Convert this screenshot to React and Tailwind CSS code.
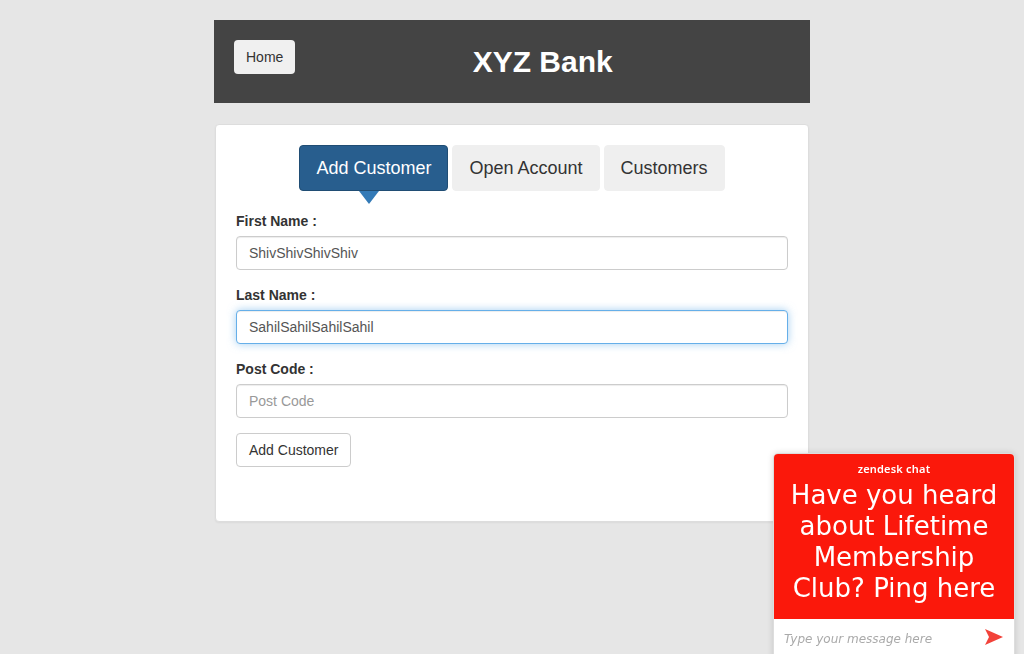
const sans = "font-['Liberation_Sans',Arial,sans-serif]";

function Field({ label, value, placeholder, focused }) {
  return (
    <div className="mb-[15px]">
      <label className="mb-[5px] block text-[14px] font-bold leading-5 text-[#333]">{label}</label>
      <input
        readOnly
        value={value}
        placeholder={placeholder}
        className={
          'block h-[34px] w-full rounded-[4px] border bg-white px-3 text-[14px] text-[#555] outline-none placeholder:text-[#999] ' +
          (focused
            ? 'border-[#66afe9] shadow-[inset_0_1px_1px_rgba(0,0,0,0.075),0_0_8px_rgba(102,175,233,0.6)]'
            : 'border-[#ccc] shadow-[inset_0_1px_1px_rgba(0,0,0,0.075)]')
        }
      />
    </div>
  );
}

export default function App() {
  return (
    <div className={`min-h-[654px] bg-[#e6e6e6] pt-5 ${sans}`}>
      <div className="mx-auto w-[596px]">
        {/* header */}
        <div className="flex h-[83px] items-start bg-[#444] p-5">
          <button className="h-[34px] rounded-[4px] bg-[#f0f0f0] px-3 text-[14px] text-[#333]">Home</button>
          <h1 className="flex-1 pt-[5px] text-center text-[30px] font-bold leading-[34px] text-white">XYZ Bank</h1>
        </div>

        {/* card */}
        <div className="mx-px mt-[21px] h-[398px] rounded-[4px] border border-[#ddd] bg-white px-5 pt-5 shadow-[0_1px_2px_rgba(0,0,0,0.05)]">
          <div className="flex justify-center gap-1">
            <div className="relative">
              <button className="h-[46px] rounded-[4px] border border-[#204d74] bg-[#285e8e] px-4 text-[18px] text-white">
                Add Customer
              </button>
              <div className="absolute left-[70px] top-[46px] h-0 w-0 -translate-x-1/2 border-x-[10px] border-t-[13px] border-x-transparent border-t-[#337ab7]" />
            </div>
            <button className="h-[46px] rounded-[4px] border border-[#efefef] bg-[#efefef] px-4 text-[18px] text-[#333]">
              Open Account
            </button>
            <button className="h-[46px] rounded-[4px] border border-[#efefef] bg-[#efefef] px-4 text-[18px] text-[#333]">
              Customers
            </button>
          </div>

          <div className="mt-5">
            <Field label="First Name :" value="ShivShivShivShiv" placeholder="First Name" />
            <Field label="Last Name :" value="SahilSahilSahilSahil" placeholder="Last Name" focused />
            <Field label="Post Code :" value="" placeholder="Post Code" />
            <button className="h-[34px] rounded-[4px] border border-[#ccc] bg-white px-3 text-[14px] text-[#333]">
              Add Customer
            </button>
          </div>
        </div>
      </div>

      {/* zendesk chat widget */}
      <div className="fixed right-[9px] top-[453px] w-[242px] overflow-hidden rounded-t-[5px] border border-[#ddd] bg-white shadow-[0_0_6px_rgba(0,0,0,0.15)]">
        <div className="flex h-[165px] flex-col items-center bg-[#fb180b] px-[10px] pt-[9px] text-white">
          <div className="font-['Noto_Sans',sans-serif] text-[11px] font-semibold leading-3 tracking-[0.2px]">zendesk chat</div>
          <div className="mt-[5px] text-center font-['DejaVu_Sans',Verdana,sans-serif] text-[26px] leading-[31px]">
            Have you heard about Lifetime Membership Club? Ping here
          </div>
        </div>
        <div className="flex h-[40px] items-center justify-between pl-[10px] pr-[11px]">
          <span className="font-['DejaVu_Sans',Verdana,sans-serif] text-[12px] italic text-[#aaa]">Type your message here</span>
          <svg width="18" height="16" viewBox="0 0 18 16" className="mb-[4px]">
            <path d="M0 0 L18 8 L0 16 L4 8 Z" fill="#f2423a" />
          </svg>
        </div>
      </div>
    </div>
  );
}
